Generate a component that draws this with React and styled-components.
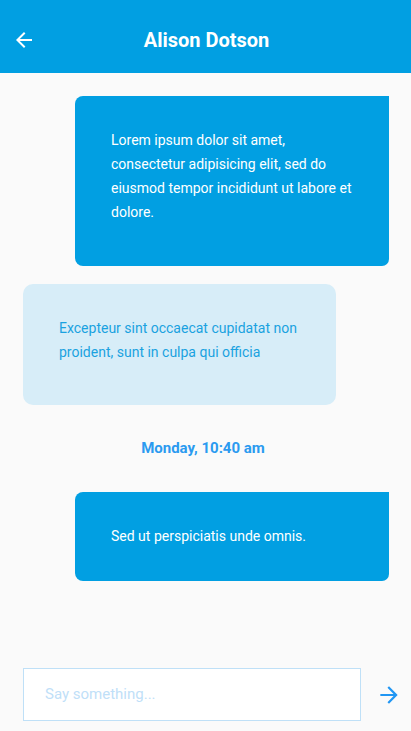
import React from "react";
import styled, { createGlobalStyle } from "styled-components";

const Global = createGlobalStyle`
  html, body { margin: 0; padding: 0; background: #fafafa; }
  body { font-family: Roboto, "Noto Sans", sans-serif; }
  * { box-sizing: border-box; }
`;

const Screen = styled.div`
  width: 411px;
  height: 731px;
  display: flex;
  flex-direction: column;
  background: #fafafa;
  overflow: hidden;
`;

const Header = styled.header`
  height: 73px;
  padding-top: 7px;
  background: #019fe2;
  display: flex;
  align-items: center;
  flex-shrink: 0;
`;

const BackButton = styled.button`
  border: 0;
  background: transparent;
  padding: 0;
  margin-left: 12px;
  width: 24px;
  height: 24px;
  display: flex;
  color: #fff;
`;

const Title = styled.h1`
  flex: 1;
  margin: 0 36px 0 0;
  text-align: center;
  color: #fff;
  font-size: 20px;
  font-weight: 700;
  padding-left: 2px;
`;

const Messages = styled.main`
  flex: 1;
  display: flex;
  flex-direction: column;
  padding: 23px 22px 0 23px;
`;

const Bubble = styled.div`
  align-self: ${(p) => (p.$mine ? "flex-end" : "flex-start")};
  width: ${(p) => (p.$mine ? "314px" : "313px")};
  background: ${(p) => (p.$mine ? "#019fe2" : "#d7edf8")};
  color: ${(p) => (p.$mine ? "#ffffff" : "#1aa2e0")};
  border-radius: ${(p) => (p.$mine ? "8px 0 7px 8px" : "10px")};
  padding: 32px 36px ${(p) => p.$bottom}px 36px;
  margin-bottom: ${(p) => p.$gap}px;
  font-size: 14px;
  line-height: 24px;
`;

const Stamp = styled.div`
  text-align: center;
  color: #2b9af0;
  font-weight: 700;
  font-size: 15px;
  line-height: 24px;
  margin: 0 0 32px 0;
  padding-right: 6px;
`;

const Composer = styled.footer`
  display: flex;
  align-items: center;
  padding: 0 9px 10px 23px;
  gap: 15px;
`;

const Input = styled.input`
  width: 339px;
  height: 53px;
  border: 1px solid #bfe0f7;
  background: #fff;
  padding: 0 0 2px 21px;
  font-family: Roboto, "Noto Sans", sans-serif;
  font-size: 15px;
  outline: none;
  &::placeholder { color: #bfe0f8; }
`;

const SendButton = styled.button`
  border: 0;
  background: transparent;
  padding: 0;
  width: 26px;
  height: 26px;
  display: flex;
  color: #2196f3;
`;

const Arrow = ({ dir, size }) => (
  <svg width={size} height={size} viewBox="0 0 24 24" fill="currentColor">
    {dir === "left" ? (
      <path d="M20 11H7.83l5.59-5.59L12 4l-8 8 8 8 1.41-1.41L7.83 13H20v-2z" />
    ) : (
      <path d="M12 4l-1.41 1.41L16.17 11H4v2h12.17l-5.58 5.59L12 20l8-8z" />
    )}
  </svg>
);

export default function App() {
  return (
    <Screen>
      <Global />
      <Header>
        <BackButton aria-label="back">
          <Arrow dir="left" size={24} />
        </BackButton>
        <Title>Alison Dotson</Title>
      </Header>
      <Messages>
        <Bubble $mine $bottom={42} $gap={18}>
          Lorem ipsum dolor sit amet, consectetur adipisicing elit, sed do eiusmod tempor incididunt ut labore et dolore.
        </Bubble>
        <Bubble $bottom={41} $gap={31}>
          Excepteur sint occaecat cupidatat non proident, sunt in culpa qui officia
        </Bubble>
        <Stamp>Monday, 10:40 am</Stamp>
        <Bubble $mine $bottom={33} $gap={0}>
          Sed ut perspiciatis unde omnis.
        </Bubble>
      </Messages>
      <Composer>
        <Input placeholder="Say something..." />
        <SendButton aria-label="send">
          <Arrow dir="right" size={26} />
        </SendButton>
      </Composer>
    </Screen>
  );
}
